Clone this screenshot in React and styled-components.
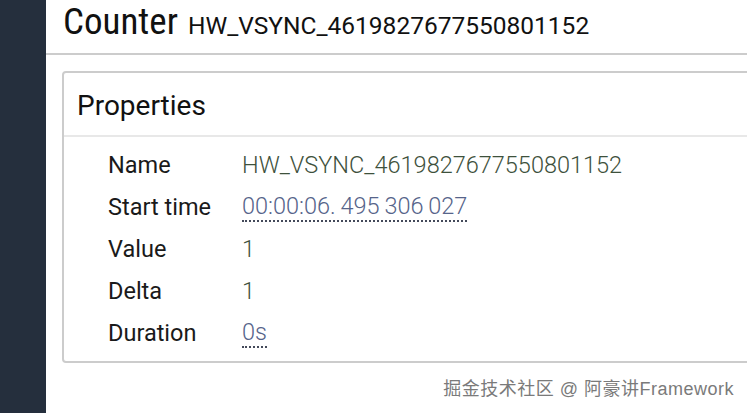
import { createGlobalStyle, styled } from "styled-components";

const GlobalStyle = createGlobalStyle`
html, body {
    margin: 0;
    padding: 0;
    background: #ffffff;
    overflow: hidden;
}
body {
    font-family: Roboto, "Noto Sans CJK SC", sans-serif;
}
`

const rows = [
    { label: "Name", value: "HW_VSYNC_4619827677550801152", kind: "plain" },
    { label: "Start time", value: "00:00:06.\u2009495\u2009306\u2009027", kind: "link" },
    { label: "Value", value: "1", kind: "plain" },
    { label: "Delta", value: "1", kind: "plain" },
    { label: "Duration", value: "0s", kind: "link" },
]

export default function App() {
    return (
        <>
            <GlobalStyle />
            <PageDiv>
                <SidebarDiv />
                <MainDiv>
                    <HeaderDiv>
                        <TitleH1>Counter</TitleH1>
                        <SubtitleSpan>HW_VSYNC_4619827677550801152</SubtitleSpan>
                    </HeaderDiv>
                    <CardDiv>
                        <CardHeaderDiv>
                            <CardTitleH2>Properties</CardTitleH2>
                        </CardHeaderDiv>
                        <PropsGrid>
                            {rows.map(({ label, value, kind }) => (
                                <PropRow key={label}>
                                    <PropLabel>{label}</PropLabel>
                                    <PropValue $kind={kind}>{value}</PropValue>
                                </PropRow>
                            ))}
                        </PropsGrid>
                    </CardDiv>
                </MainDiv>
                <WatermarkSpan>掘金技术社区 @ 阿豪讲Framework</WatermarkSpan>
            </PageDiv>
        </>
    )
}

const PageDiv = styled.div`
position: relative;
display: flex;
width: 747px;
height: 413px;
overflow: hidden;
`

const SidebarDiv = styled.div`
flex: 0 0 46px;
background-color: #252f3d;
`

const MainDiv = styled.div`
flex: 1;
display: flex;
flex-direction: column;
min-width: 0;
`

const HeaderDiv = styled.div`
display: flex;
align-items: baseline;
gap: 10px;
height: 53px;
padding: 0 0 0 17px;
border-bottom: 2px solid #cccccc;
box-sizing: content-box;
`

const TitleH1 = styled.h1`
margin: 0;
font-family: Roboto, sans-serif;
font-weight: 400;
font-size: 37px;
font-stretch: 78%;
line-height: 44px;
color: #111111;
`

const SubtitleSpan = styled.span`
font-size: 24.5px;
font-weight: 400;
color: #111111;
`

const CardDiv = styled.div`
margin: 16px -20px 0 16px;
border: 2px solid #cccccc;
border-radius: 4px;
height: 288px;
`

const CardHeaderDiv = styled.div`
height: 62px;
display: flex;
align-items: center;
padding-left: 13px;
border-bottom: 2px solid #e8e8e8;
`

const CardTitleH2 = styled.h2`
margin: 2px 0 0 0;
font-weight: 400;
font-size: 28px;
color: #111111;
`

const PropsGrid = styled.div`
display: flex;
flex-direction: column;
padding: 7px 0 0 44px;
`

const PropRow = styled.div`
display: grid;
grid-template-columns: 134px 1fr;
height: 42px;
align-items: center;
font-size: 23.5px;
`

const PropLabel = styled.span`
color: #1a1a1a;
font-weight: 400;
`

const PropValue = styled.span`
justify-self: start;
font-weight: 300;
color: ${({ $kind }) => ($kind === "link" ? "#56648a" : "#3e513c")};
border-bottom: ${({ $kind }) => ($kind === "link" ? "2px dotted #444a5a" : "none")};
line-height: 27px;
`

const WatermarkSpan = styled.span`
position: absolute;
right: 13px;
bottom: 13px;
font-family: "Liberation Sans", "Noto Sans CJK SC", sans-serif;
font-size: 18px;
letter-spacing: 0.5px;
color: #7a7a7a;
text-shadow: 0 0 1px #ffffff;
`
